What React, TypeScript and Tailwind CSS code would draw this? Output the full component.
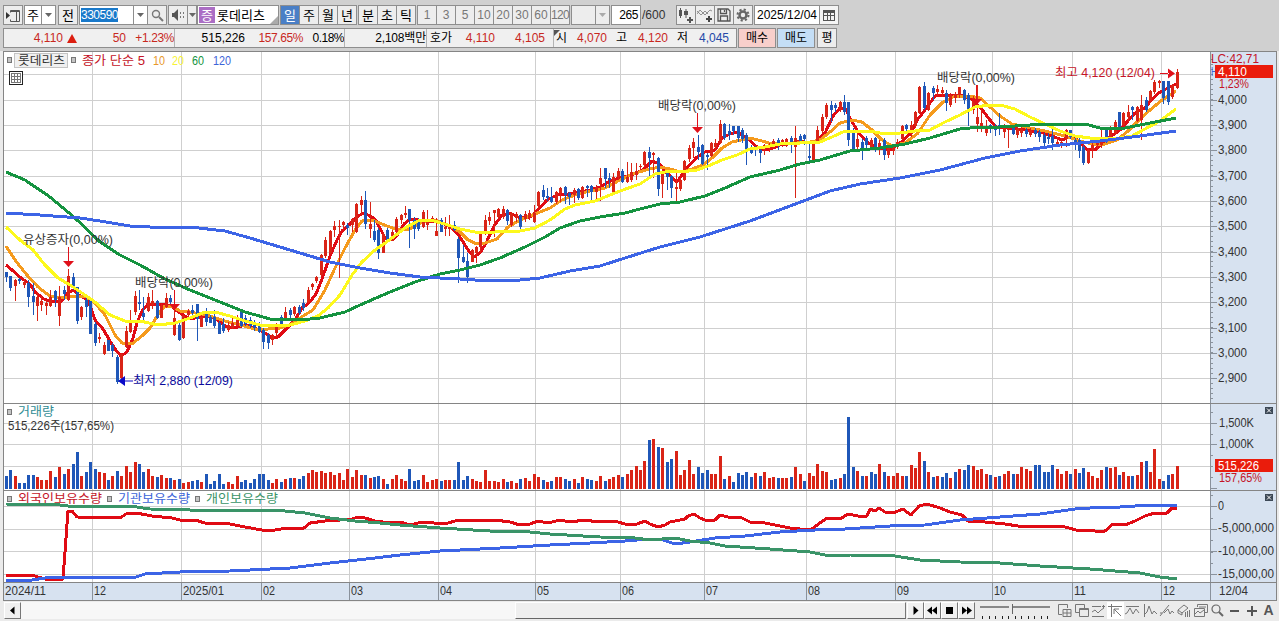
import React from 'react'
import clsx from 'clsx'

const RED = '#d92417'
const BLUE = '#1f57b8'
const GRID = '#cfcfcf'
const FONT = '"Liberation Sans", "Noto Sans CJK KR", sans-serif'

const FIRST_X = 6.5
const STEP = 4.434
const barX = (i: number) => Math.round(FIRST_X + i * STEP - 0.5)

// color high top bottom low
const CANDLES = `b 272 272 277 282|b 276 276 288 291|r 279 280 286 301|b 278 279 281 284|r 279 282 285 288|b 280 283 297 307|b 283 296 302 315|r 292 297 306 321|r 296 301 305 311|r 300 303 306 315
r 290 297 306 307|b 290 291 300 307|r 286 297 316 326|b 286 290 294 300|r 269 276 300 301|b 273 277 287 290|b 287 287 321 324|r 306 307 317 320|b 297 300 307 317|b 299 299 334 334
b 322 324 343 346|r 333 337 339 343|r 342 345 354 355|b 340 340 351 351|b 343 345 351 357|b 355 357 382 384|r 353 354 378 381|r 326 331 347 348|r 310 320 332 333|r 291 296 312 315
b 290 302 304 310|b 297 313 317 320|r 293 297 311 312|r 290 301 305 309|b 300 301 318 319|r 304 306 318 318|r 293 298 307 308|b 295 298 302 305|r 293 318 335 336|b 323 325 340 341
r 315 316 338 339|r 309 311 315 320|b 305 310 313 315|b 304 304 319 341|r 315 317 327 327|b 308 312 322 326|b 315 317 323 323|b 310 317 326 328|b 321 323 334 334|b 318 324 331 333
r 322 325 330 332|r 317 323 328 329|r 315 320 326 326|b 310 310 326 327|b 315 318 324 326|b 317 320 326 328|b 320 323 328 331|b 322 325 332 333|b 328 330 342 349|b 333 335 343 349
r 334 335 340 345|r 323 325 333 337|b 315 317 324 327|r 307 312 319 320|b 308 310 315 318|r 306 307 314 316|b 305 307 313 315|b 299 303 308 311|r 287 290 302 303|r 283 284 287 290
r 276 277 281 283|r 254 255 275 276|r 237 240 256 258|r 230 231 253 254|r 221 226 230 237|r 220 226 227 278|r 221 222 225 230|b 223 225 228 235|r 218 219 225 232|r 203 204 232 233
r 196 200 205 215|b 191 200 224 229|r 202 224 229 238|b 220 231 240 242|b 228 230 253 259|r 233 234 253 253|b 228 230 240 240|r 230 232 241 241|r 217 219 232 233|r 214 215 220 224
r 206 213 215 218|b 209 209 220 248|b 217 220 229 239|b 218 220 229 231|r 210 212 227 228|r 210 219 225 230|r 216 218 221 223|r 218 231 236 236|b 218 220 232 232|r 217 227 229 236
r 215 225 229 236|b 221 225 230 231|b 237 239 258 283|b 245 257 262 263|b 253 261 277 283|r 249 250 262 262|r 246 247 253 263|r 232 233 247 253|r 215 220 234 235|r 212 217 221 225
r 210 210 213 237|r 208 209 217 218|r 206 209 217 219|b 209 210 221 225|r 212 213 225 227|r 212 214 218 222|b 214 215 227 232|r 211 214 219 222|r 210 213 218 220|r 205 213 222 223
r 191 192 206 208|b 185 190 197 200|b 188 196 198 201|b 187 197 202 203|r 191 192 202 204|r 187 188 193 202|b 186 187 195 204|b 192 193 197 205|r 188 190 195 203|b 188 189 198 200
r 186 187 198 199|b 185 186 188 197|b 185 186 192 200|r 185 187 192 199|r 168 178 184 201|b 168 168 179 188|b 173 178 180 188|r 173 177 193 194|r 168 171 177 180|b 169 171 182 183
r 162 177 182 183|r 163 172 180 182|r 163 171 175 180|r 164 166 167 170|r 151 152 165 167|b 147 152 158 178|r 152 153 155 178|b 157 158 189 196|r 170 171 184 198|b 171 172 177 190
b 175 176 188 198|r 173 187 189 202|r 178 180 189 191|r 160 161 180 181|r 145 148 159 162|r 138 142 148 158|b 135 147 152 160|b 144 145 164 165|b 153 155 157 170|r 142 143 156 157
r 139 143 147 150|r 120 124 143 144|b 123 124 138 140|b 124 131 135 140|b 126 126 131 135|b 126 126 138 142|b 128 130 139 143|b 133 135 149 165|b 145 147 153 154|b 146 148 150 156
b 148 150 153 163|r 144 145 150 155|r 143 145 148 152|r 139 141 146 148|b 138 140 143 150|r 139 140 143 147|r 138 139 146 147|b 136 138 145 153|r 126 138 147 198|b 134 136 141 143
b 134 135 139 145|b 143 156 158 163|r 142 143 161 163|r 126 130 143 144|r 114 117 131 133|r 103 105 117 119|b 101 105 110 122|b 103 105 108 112|r 101 102 110 112|b 95 102 112 115
b 102 102 140 146|b 128 130 149 150|r 130 139 147 150|b 139 142 148 160|b 136 138 145 148|r 138 140 147 150|b 137 138 150 152|r 140 143 150 155|b 138 140 155 160|r 146 148 155 158
r 144 147 151 155|r 139 142 147 149|r 125 126 139 140|b 124 125 129 132|r 121 125 134 137|r 111 112 126 128|r 86 87 113 114|b 82 86 108 110|r 92 93 110 111|b 86 88 93 100
r 85 89 92 96|r 87 90 93 97|b 90 93 103 111|r 93 95 105 107|r 92 94 98 103|r 87 87 95 98|b 89 90 100 104|b 93 95 111 126|r 96 98 110 114|r 85 117 124 132
r 108 123 128 132|r 120 127 133 136|b 124 125 129 133|b 124 127 130 136|b 113 125 128 135|r 124 127 132 138|r 125 127 130 148|b 125 128 134 135|r 126 128 135 138|r 127 129 133 137
b 128 130 134 137|r 128 130 135 137|b 128 130 134 137|b 130 132 137 142|b 133 135 143 148|b 133 137 139 144|b 125 136 143 150|r 137 142 144 147|r 138 142 144 148|r 129 130 139 147
b 130 130 137 139|b 138 140 145 150|b 138 140 151 158|b 145 147 163 165|r 148 150 163 164|r 143 145 150 158|r 138 140 145 150|r 129 138 145 148|b 128 129 141 143|r 126 130 137 140
r 120 122 133 135|b 112 112 128 130|r 112 113 125 126|r 105 112 117 122|b 106 107 110 120|r 106 107 121 122|r 95 105 120 140|b 97 100 110 112|r 90 91 101 103|r 80 82 92 94
r 80 81 83 88|b 81 81 98 104|b 81 81 102 105|r 84 85 97 99|r 69 72 88 89`
  .split(/[|\n]/)
  .map((row) => {
    const [c, ...ys] = row.trim().split(' ')
    const [high, top, bottom, low] = ys.map(Number)
    return { color: c === 'r' ? RED : BLUE, high, top, bottom, low }
  })

// bar tops in thirds of a pixel, 267 is the base line
const VOLUME = `228b 210b 228r 250b 250b 225b 225b 230r 240r 240r 213r 230b 200r 222b 207r 192b 156b 228r 215b 186b
207b 216r 218r 240b 228r 213b 228r 198r 216r 186r 192b 216b 207r 228r 230b 225r 234r 234b 240r 237b
248r 246r 243b 240b 246r 222b 252b 243b 222b 252b 246r 252r 228r 246b 240b 248b 237b 222b 222b 240b
250r 237r 246b 237r 234b 234r 237b 228b 219r 210r 216r 213r 219r 216r 225r 219r 240r 207r 231r 210r
225r 225b 234r 231b 228b 237r 252b 237r 225r 237r 243r 207b 243b 240b 225r 246r 240r 237r 243b 240r
240r 240b 186b 240b 228b 237r 243r 246r 210r 243r 243r 246r 237r 246b 243r 249r 237b 234r 243r 222r
231r 240b 246r 243b 231r 231r 237b 243b 237r 249b 231r 237b 240b 243r 228r 243b 237r 231r 225r 231b
222r 210r 198r 210r 183r 120b 117r 141b 144r 186b 177b 153r 225r 210r 180r 222r 201b 219b 210b 222r
222r 168r 237b 228r 246b 219b 225b 216b 231b 219r 228b 216r 234r 231r 234b 234r 234r 231b 201r 222r
243b 219r 228r 192r 213r 216r 240b 237b 234r 222b 51b 201b 213r 228b 228r 216b 222b 192r 216b 228r
228r 219r 228r 228b 195r 204r 156r 183b 216r 231b 228r 231b 219b 234r 216b 207r 210b 195b 198r 210r
207r 222r 225b 231r 228b 222r 213r 222b 222r 201r 207r 213r 195b 195b 216b 216b 195b 207r 222r 213r
222b 207r 219b 204b 216r 228r 234r 210r 201b 204r 201r 225b 216r 228r 228b 225r 186r 183b 216r 147r
237r 243b 225b 222r 198r`
  .split(/\s+/)
  .map((v) => ({ top: 400 + parseInt(v) / 3, color: v.endsWith('r') ? RED : BLUE }))

const MA5 =
  '6,265 12,270 21,278 30,284 35,292 44,299 52,302 62,301 68,293 73,290 80,296 88,300 95,320 103,329 110,341 115,349 121,356 127,352 133,338 137,323 142,311 148,304 156,304 165,304 172,307 180,313 190,319 205,316 215,318 225,326 235,328 245,325 255,328 265,333 272,338 278,337 285,330 295,320 302,308 309,303 316,294 322,279 330,256 337,240 342,231 350,224 357,217 363,213 368,215 375,219 380,228 385,238 392,240 398,234 404,224 410,219 418,220 428,221 440,222 452,228 460,237 468,250 474,257 480,253 487,241 494,226 502,215 510,213 520,218 530,217 537,211 547,200 557,195 568,194 580,192 590,190 600,187 612,180 620,178 632,175 643,170 652,161 660,164 667,173 677,182 687,168 697,157 705,152 715,150 722,138 730,134 737,132 747,138 757,147 765,150 773,148 780,145 800,141 810,143 817,141 825,133 833,116 840,108 845,108 850,118 858,132 867,142 877,148 890,150 900,143 910,134 918,119 925,110 935,96 945,95 960,95 970,98 980,107 990,120 996,127 1010,128 1025,130 1040,132 1052,136 1062,140 1072,136 1080,142 1086,149 1095,150 1102,143 1110,137 1120,130 1127,122 1135,113 1145,108 1152,99 1160,92 1168,88 1176,84'
const MA10 =
  '6,246 15,260 27,275 38,287 50,296 62,298 73,296 85,296 95,303 105,315 115,335 122,343 132,344 142,336 150,328 157,316 165,306 172,306 180,311 190,312 210,316 225,321 240,325 255,329 268,329 280,328 292,324 303,316 313,310 325,290 335,268 345,248 355,230 362,221 372,220 382,224 395,229 410,229 422,222 435,220 450,226 460,232 468,240 477,244 485,243 497,239 508,227 520,220 535,214 550,208 562,200 575,195 590,191 605,188 620,180 635,173 650,169 660,167 670,169 680,172 692,169 703,165 712,158 722,148 732,142 750,138 762,141 772,144 790,143 810,142 820,140 830,132 840,123 852,120 862,122 872,130 882,140 892,146 905,143 918,133 930,115 943,102 955,96 970,96 980,98 990,107 1000,116 1012,124 1025,127 1045,131 1065,136 1080,141 1092,144 1105,144 1117,140 1127,132 1137,122 1150,110 1162,100 1176,91'
const MA20 =
  '6,227 20,240 33,250 45,265 58,278 70,285 82,293 95,302 110,315 125,321 140,321 158,325 175,323 190,318 205,312 215,312 230,316 245,321 260,325 277,326 290,325 305,321 318,316 328,308 340,295 352,275 362,262 375,250 388,241 405,228 418,221 430,220 445,224 460,229 475,232 495,232 520,231 535,228 550,220 565,209 575,205 595,201 620,191 640,184 655,174 670,171 680,172 697,170 708,166 722,160 737,155 750,149 765,147 780,144 800,143 820,142 832,137 843,132 855,131 870,131 885,134 900,133 915,131 930,130 945,122 960,115 975,107 990,105 1000,105 1015,109 1030,117 1045,124 1060,131 1075,136 1090,138 1105,138 1120,138 1132,136 1145,129 1160,121 1176,109'
const MA60 =
  '6,172 25,180 50,197 75,218 100,242 120,255 140,265 165,279 190,290 220,302 245,312 270,319 300,320 320,318 345,312 360,305 390,292 415,282 440,274 460,270 480,265 500,258 525,247 545,237 560,228 580,221 600,217 625,213 640,209 660,204 680,202 705,196 725,188 750,177 780,170 800,164 820,160 850,151 880,148 905,144 930,138 960,129 980,127 1000,127 1030,125 1050,124 1085,124 1100,128 1125,128 1150,123 1176,118'
const MA120 =
  '6,213 40,215 80,218 100,221 130,226 150,227 190,227 225,231 250,238 280,247 300,253 330,262 360,268 390,273 420,277 440,278 460,279 475,280 520,280 540,278 570,271 600,266 625,258 660,247 700,237 750,221 790,206 830,191 860,184 900,178 940,170 985,158 1020,151 1060,145 1100,141 1140,136 1176,131'

const FOREIGN =
  '6,576 12,575 32,575 38,577 45,579 63,579 68,511 72,511 77,517 120,518 126,514 136,513 152,516 172,518 180,520 195,520 205,523 230,524 245,527 262,530 275,530 287,528 304,528 310,523 325,521 340,520 352,519 358,517 365,518 375,521 390,523 400,522 410,525 422,522 445,524 455,521 470,520 495,520 510,522 520,525 530,524 538,521 548,523 560,520 570,522 585,520 598,522 605,521 618,522 625,524 637,524 645,521 650,524 658,527 665,525 670,522 685,519 688,516 694,514 700,518 705,520 715,520 720,515 728,517 740,517 750,522 760,522 775,525 790,528 800,529 812,529 820,523 827,518 840,519 848,514 858,516 867,516 870,509 875,511 879,508 885,512 893,513 903,509 911,515 919,506 927,504 940,508 950,512 962,515 968,521 985,522 1005,524 1018,526 1045,526 1065,527 1080,531 1088,530 1095,531 1105,531 1113,524 1125,525 1135,521 1145,516 1155,513 1167,513 1172,508 1177,508'
const INSTITUTION =
  '6,580 32,580 45,578 78,577 110,577 133,578 145,574 180,572 230,571 290,568 330,563 375,558 400,555 440,551 500,548 550,545 590,543 625,541 650,539 663,540 675,544 690,542 715,538 745,536 780,532 815,530 845,529 890,526 925,525 960,520 1000,517 1040,514 1075,509 1105,507 1120,507 1150,505 1177,505'
const PERSONAL =
  '6,504 60,505 68,506 130,506 150,509 190,510 275,510 305,513 330,518 355,521 380,523 400,525 440,528 490,531 520,531 550,534 600,537 635,538 650,540 675,538 690,541 710,543 725,546 770,549 810,552 825,555 850,555 895,556 920,560 960,562 1000,563 1040,566 1090,569 1140,573 1160,577 1177,579'

const MONTHS: [number, string][] = [
  [92, '12'], [181, '2025/01'], [261, '02'], [349, '03'], [438, '04'], [535, '05'], [620, '06'],
  [704, '07'], [806, '08'], [895, '09'], [992, '10'], [1072, '11'], [1161, '12'],
]
const PRICE_Y = [74, 100, 125, 150, 176, 201, 226, 252, 277, 302, 328, 353, 378]
const PRICE_LABELS = ['', '4,000', '3,900', '3,800', '3,700', '3,600', '3,500', '3,400', '3,300', '3,200', '3,100', '3,000', '2,900']

interface LabelProps {
  x: number
  y: number
  w: number
  children: string
  fill?: string
  size?: number
}

function Label({ x, y, w, children, fill = '#333', size = 12 }: LabelProps) {
  return (
    <text x={x} y={y} fill={fill} fontSize={size} fontFamily={FONT} textLength={w} lengthAdjust="spacingAndGlyphs">
      {children}
    </text>
  )
}

function Marker({ x, y }: { x: number; y: number }) {
  return <rect x={x + 0.5} y={y + 0.5} width="4" height="5" fill="#c4c4c4" stroke="#777" shapeRendering="crispEdges" />
}

function Grid({ top, bottom, rows }: { top: number; bottom: number; rows: number[] }) {
  return (
    <g fill={GRID} shapeRendering="crispEdges">
      {rows.map((y) => <rect key={y} x="4" y={y} width="1206" height="1" />)}
      {MONTHS.map(([x]) => <rect key={x} x={x} y={top} width="1" height={bottom - top} />)}
    </g>
  )
}

function Line({ points, color }: { points: string; color: string }) {
  return <polyline points={points} fill="none" stroke={color} strokeWidth="3" strokeLinejoin="round" shapeRendering="crispEdges" />
}

function DownArrow({ x, y, from }: { x: number; y: number; from: number }) {
  return (
    <g fill="#e0101a">
      <rect x={x - 0.5} y={from} width="1" height={y - from} />
      <path d={`M${x - 5.5} ${y}h11l-5.5 6z`} />
    </g>
  )
}

function Ticks({ from, to, step }: { from: number; to: number; step: number }) {
  const count = Math.floor((to - from) / step) + 1
  return (
    <g fill="#8a929c" shapeRendering="crispEdges">
      {Array.from({ length: count }, (_, i) => <rect key={i} x="1211" y={Math.round(from + i * step)} width="2" height="1" />)}
    </g>
  )
}

function CloseMark({ y }: { y: number }) {
  return (
    <g>
      <rect x="1265" y={y} width="8" height="7" fill="#3c4856" />
      <path d={`M1267 ${y + 1.5}l4 4m0-4l-4 4`} stroke="#fff" />
    </g>
  )
}

function PricePanel() {
  return (
    <div className="flex h-[351px]">
      <svg width="1206" height="351" viewBox="4 52 1206 351" className="bg-white">
        <Grid top={52} bottom={403} rows={PRICE_Y} />
        <Line points={MA5} color="#e00b14" />
        <Line points={MA10} color="#f59a1c" />
        <g shapeRendering="crispEdges">
          {CANDLES.map((c, i) => (
            <g key={i} fill={c.color}>
              <rect x={barX(i)} y={c.high} width="1" height={c.low - c.high} />
              <rect x={barX(i) - 1} y={c.top} width="3" height={c.bottom - c.top} />
            </g>
          ))}
        </g>
        <Line points={MA20} color="#fdf91c" />
        <Line points={MA60} color="#159340" />
        <Line points={MA120} color="#3c64e6" />

        <Label x={23} y={244} w={90}>유상증자(0,00%)</Label>
        <DownArrow x={68.5} y={261} from={247} />
        <Label x={135} y={287} w={78}>배당락(0,00%)</Label>
        <DownArrow x={174.5} y={304} from={290} />
        <Label x={658} y={110} w={78}>배당락(0,00%)</Label>
        <DownArrow x={697.5} y={127} from={113} />
        <Label x={937} y={82} w={78}>배당락(0,00%)</Label>
        <DownArrow x={976.5} y={99} from={85} />
        <path d="M118 381l7-5v10zM124 380.5h9v1h-9z" fill="#0a0ac8" />
        <Label x={133} y={385} w={100} fill="#0a0a9c">최저 2,880 (12/09)</Label>
        <Label x={1055} y={77} w={100} fill="#c41427">최고 4,120 (12/04)</Label>
        <path d="M1175 73.5l-7-5v10zM1160 73h9v1h-9z" fill="#e0101a" />

        <Marker x={7} y={57} />
        <rect x="14.5" y="53.5" width="53" height="14" fill="#f0f0f0" stroke="#c4c4c4" />
        <Label x={18} y={65} w={47}>롯데리츠</Label>
        <Marker x={71} y={57} />
        <Label x={82} y={65} w={63} fill="#c41427">종가 단순 5</Label>
        <Label x={153} y={65} w={12} fill="#e8982a">10</Label>
        <Label x={172} y={65} w={12} fill="#f7f235">20</Label>
        <Label x={192} y={65} w={12} fill="#159340">60</Label>
        <Label x={213} y={65} w={18} fill="#3c64d8">120</Label>
        <g fill="none" stroke="#222" shapeRendering="crispEdges">
          <rect x="9.5" y="71.5" width="13" height="13" fill="#fff" />
          <path d="M11.5 73.5h9v9h-9zM11.5 76.5h9M11.5 79.5h9M14.5 73.5v9M17.5 73.5v9" stroke="#777" />
        </g>
      </svg>
      <svg width="66" height="351" viewBox="1210 52 66 351" className="bg-[#d7e2f0]">
        <rect x="1210" y="52" width="1" height="351" fill="#8a929c" />
        <Ticks from={59} to={400} step={5.06} />
        {PRICE_Y.map((y, i) => i > 0 && (
          <g key={y}>
            <rect x="1211" y={y} width="6" height="1" fill="#8a929c" />
            <Label x={1218} y={y + 4} w={29}>{PRICE_LABELS[i]}</Label>
          </g>
        ))}
        <Label x={1211} y={63} w={48} fill="#c41427">LC:42,71</Label>
        <Label x={1211} y={76} w={6} fill="#3c64d8">H</Label>
        <rect x="1215" y="65" width="58" height="13" fill="#ea1c0c" />
        <Label x={1218} y={76} w={29} fill="#fff">4,110</Label>
        <Label x={1219} y={88} w={30} fill="#c41427">1,23%</Label>
      </svg>
    </div>
  )
}

function VolumePanel() {
  return (
    <div className="flex h-[87px] border-t border-[#858585]">
      <svg width="1206" height="86" viewBox="4 404 1206 86" className="bg-white">
        <Grid top={404} bottom={490} rows={[423, 444, 466]} />
        <g shapeRendering="crispEdges">
          {VOLUME.map((v, i) => (
            <rect key={i} x={barX(i) - 1} y={Math.round(v.top)} width="3" height={489 - Math.round(v.top)} fill={v.color} />
          ))}
        </g>
        <Marker x={7} y={409} />
        <Label x={18} y={416} w={36} fill="#2f8c94">거래량</Label>
        <Label x={8} y={430} w={106}>515,226주(157,65%)</Label>
      </svg>
      <svg width="66" height="86" viewBox="1210 404 66 86" className="bg-[#d7e2f0]">
        <rect x="1210" y="404" width="1" height="86" fill="#8a929c" />
        <Ticks from={412} to={489} step={10.8} />
        <path d="M1211 423.5h6M1211 444.5h6M1211 488.5h6" stroke="#8a929c" />
        <Label x={1219} y={427} w={35}>1,500K</Label>
        <Label x={1219} y={448} w={35}>1,000K</Label>
        <rect x="1215" y="459" width="58" height="13" fill="#ea1c0c" />
        <Label x={1218} y={470} w={41} fill="#fff">515,226</Label>
        <Label x={1219} y={482} w={43} fill="#c41427">157,65%</Label>
        <CloseMark y={407} />
      </svg>
    </div>
  )
}

function HoldingsPanel() {
  return (
    <div className="flex h-[92px] border-t border-[#858585]">
      <svg width="1206" height="91" viewBox="4 491 1206 91" className="bg-white">
        <Grid top={491} bottom={582} rows={[506, 529, 551, 574]} />
        <Marker x={7} y={496} />
        <Label x={18} y={503} w={84} fill="#c41427">외국인보유수량</Label>
        <Marker x={107} y={496} />
        <Label x={118} y={503} w={72} fill="#3c64d8">기관보유수량</Label>
        <Marker x={195} y={496} />
        <Label x={206} y={503} w={72} fill="#3a9468">개인보유수량</Label>
        <Line points={FOREIGN} color="#e00b14" />
        <Line points={INSTITUTION} color="#3c64e6" />
        <Line points={PERSONAL} color="#3a9468" />
      </svg>
      <svg width="66" height="91" viewBox="1210 491 66 91" className="bg-[#d7e2f0]">
        <rect x="1210" y="491" width="1" height="91" fill="#8a929c" />
        <Ticks from={495} to={580} step={11.3} />
        <path d="M1211 506.5h6M1211 529.5h6M1211 551.5h6M1211 574.5h6" stroke="#8a929c" />
        <Label x={1218} y={510} w={6}>0</Label>
        <Label x={1218} y={532} w={56}>-5,000,000</Label>
        <Label x={1218} y={555} w={56}>-10,000,00</Label>
        <Label x={1218} y={578} w={56}>-15,000,00</Label>
        <CloseMark y={494} />
      </svg>
    </div>
  )
}

function DateAxis() {
  return (
    <svg width="1272" height="19" viewBox="4 582 1272 19" className="bg-[#d7e2f0]">
      <rect x="4" y="582" width="1272" height="1" fill="#858585" />
      <rect x="4" y="600" width="1272" height="1" fill="#858585" />
      <Label x={5} y={595} w={41}>2024/11</Label>
      {MONTHS.map(([x, text]) => (
        <g key={x}>
          <rect x={x} y="583" width="1" height="17" fill="#8a929c" />
          <Label x={x + 2} y={595} w={text.length > 2 ? 41 : 12}>{text}</Label>
        </g>
      ))}
      <rect x="1210" y="583" width="1" height="17" fill="#8a929c" />
      <Label x={1219} y={595} w={29}>12/04</Label>
    </svg>
  )
}

function Cell({ className, children }: { className?: string; children?: React.ReactNode }) {
  return (
    <div className={clsx('flex h-5 shrink-0 items-center justify-center border border-[#8e8e8e] leading-none whitespace-nowrap', className)}>
      {children}
    </div>
  )
}

function Caret({ color = '#666' }: { color?: string }) {
  return <svg width="7" height="4" className="shrink-0"><path d="M0 0h7L3.5 4z" fill={color} /></svg>
}

function Toolbar() {
  const btn = 'w-5 bg-[#ededed] text-[13px]'
  return (
    <div className="flex h-5">
      <Cell className="w-5 bg-[#ededed]">
        <svg width="14" height="13" fill="none" stroke="#555">
          <path d="M4.5 3.5v-2h9v11h-9v-2M10.5 1.5v11M4.5 2.5h9" />
          <path d="M0 3l4 3.5L0 10z" fill="#333" stroke="none" />
        </svg>
      </Cell>
      <Cell className="ml-px w-[18px] bg-white text-[13px]">주</Cell>
      <Cell className="-ml-px w-[15px] bg-white"><Caret /></Cell>
      <Cell className="ml-[2px] w-5 bg-[#ededed] text-[13px]">전</Cell>
      <Cell className="ml-px w-[55px] justify-start! bg-white pl-px">
        <span className="bg-[#1979ca] py-px text-[12px] tracking-[-0.5px] text-white">330590</span>
      </Cell>
      <Cell className="-ml-px w-[15px] bg-white"><Caret /></Cell>
      <Cell className="-ml-px w-5 bg-[#ededed]">
        <svg width="13" height="13" fill="none" stroke="#777"><circle cx="5" cy="5" r="3.5" strokeWidth="1.4" /><path d="M8 8l4 4" strokeWidth="2" /></svg>
      </Cell>
      <Cell className="ml-px w-5 bg-[#ededed]">
        <svg width="14" height="12"><path d="M1 4h2l4-4v12L3 8H1z" fill="#555" /><path d="M9 3h1v2H9zM12 3h1v2h-1zM9 7h1v2H9zM12 7h1v2h-1z" fill="#777" /></svg>
      </Cell>
      <Cell className="-ml-px w-[10px] bg-[#ededed]"><Caret /></Cell>
      <Cell className="relative w-[82px] justify-start! bg-white">
        <span className="ml-px flex h-4 w-4 items-center justify-center bg-[#ab6dc4] text-[13px] text-white">증</span>
        <span className="ml-[2px] text-[13px]">롯데리츠</span>
        <svg className="absolute right-0 bottom-0" width="8" height="8"><path d="M8 0v8H0z" fill="#aaa" /></svg>
      </Cell>
      <Cell className="ml-px w-5 bg-[#4a7fc6] text-[13px] text-white">일</Cell>
      {['주', '월', '년'].map((t) => <Cell key={t} className={clsx(btn, '-ml-px')}>{t}</Cell>)}
      {['분', '초', '틱'].map((t, i) => <Cell key={t} className={clsx(btn, i ? '-ml-px' : 'ml-px')}>{t}</Cell>)}
      {['1', '3', '5', '10', '20', '30', '60', '120'].map((t, i) => (
        <Cell key={t} className={clsx('w-5 bg-[#ededed] text-[12px] text-[#777]', i ? '-ml-px' : 'ml-px', t.length > 2 && 'tracking-[-0.7px]')}>{t}</Cell>
      ))}
      <Cell className="ml-px w-[25px] bg-[#ededed]" />
      <Cell className="-ml-px w-[15px] bg-[#ededed]"><Caret color="#aaa" /></Cell>
      <Cell className="ml-px w-[30px] justify-end! bg-white pr-[2px] text-[12px] tracking-[-0.4px]">265</Cell>
      <span className="flex w-[35px] items-center pl-px text-[12px] text-[#333]">/600</span>
      <Cell className="w-5 bg-[#ededed]">
        <svg width="16" height="15" fill="#555"><path d="M1 2h3v6H1zM2 0h1v10H2zM6 3h4v4H6zM7.500 1h1v9h-1zM11 9h2v2h2v2h-2v2h-2v-2H9v-2h2z" /></svg>
      </Cell>
      <Cell className="-ml-px w-5 bg-[#ededed]">
        <svg width="16" height="15" fill="none" stroke="#777"><path d="M0 6l3-4 5 5 5-5 2 1M0 3l4 4 4-4 3 3" strokeWidth="0.8" /><path d="M11 8h2v2h2v2h-2v2h-2v-2H9v-2h2z" fill="#444" stroke="none" /></svg>
      </Cell>
      <Cell className="-ml-px w-5 bg-[#ededed]">
        <svg width="14" height="14" fill="none" stroke="#555" strokeWidth="1.3"><path d="M1 1h10l2 2v10H1zM3.500 1v4.500h6V1M3.500 13V8h7v5M7.500 2v2" /></svg>
      </Cell>
      <Cell className="-ml-px w-5 bg-[#ededed]">
        <svg width="14" height="14" fill="none" stroke="#666"><circle cx="7" cy="7" r="3.500" strokeWidth="2.500" /><circle cx="7" cy="7" r="5.500" strokeWidth="2" strokeDasharray="2.160 2.160" /></svg>
      </Cell>
      <Cell className="ml-px w-[66px] bg-white text-[12px]">2025/12/04</Cell>
      <Cell className="-ml-px w-5 bg-[#f4f4f4]">
        <svg width="12" height="11" fill="none" stroke="#555" shapeRendering="crispEdges"><path d="M.5.5h11v10H.5zM.5 5.500h11M4.500 3v7M7.500 3v7" /><path d="M1 2h10" strokeWidth="2" /></svg>
      </Cell>
    </div>
  )
}

function QuoteBar() {
  const num = 'shrink-0 text-right text-[12px]'
  return (
    <div className="mt-[3px] flex h-5">
      <div className="flex h-5 w-[734px] items-center border border-[#8e8e8e] bg-[#f0f0f0] leading-none whitespace-nowrap text-black">
        <span className={clsx(num, 'w-[59px] text-[#c8281e]')}>4,110</span>
        <svg className="ml-1" width="10" height="9"><path d="M5 0l5 9H0z" fill="#dc1e10" /></svg>
        <span className={clsx(num, 'w-[49px] text-[#c8281e]')}>50</span>
        <span className={clsx(num, 'w-[48px] tracking-[-0.4px] text-[#c8281e]')}>+1.23%</span>
        <span className="h-full w-px bg-[#b4b4b4]" />
        <span className={clsx(num, 'w-[70px]')}>515,226</span>
        <span className={clsx(num, 'w-[58px] tracking-[-0.4px] text-[#c8281e]')}>157.65%</span>
        <span className={clsx(num, 'w-[41px] tracking-[-0.5px]')}>0.18%</span>
        <span className="h-full w-px bg-[#b4b4b4]" />
        <span className={clsx(num, 'w-[81px] tracking-[-0.2px]')}>2,108백만</span>
        <span className="h-full w-px bg-[#b4b4b4]" />
        <span className="w-[26px] shrink-0 pl-[3px] text-[12px]">호가</span>
        <span className={clsx(num, 'w-[42px] text-[#c8281e]')}>4,110</span>
        <span className={clsx(num, 'w-[50px] text-[#c8281e]')}>4,105</span>
        <span className="relative ml-2 h-full w-px bg-[#b4b4b4]">
          <svg className="absolute top-px left-px" width="6" height="6"><path d="M0 0h6L0 6z" fill="#555" /></svg>
        </span>
        <span className="w-[13px] shrink-0 pl-[2px] text-[12px]">시</span>
        <span className={clsx(num, 'w-[40px] text-[#c8281e]')}>4,070</span>
        <span className="ml-[9px] w-[12px] shrink-0 text-[12px]">고</span>
        <span className={clsx(num, 'w-[40px] text-[#c8281e]')}>4,120</span>
        <span className="ml-[9px] w-[12px] shrink-0 text-[12px]">저</span>
        <span className={clsx(num, 'w-[40px] text-[#2448a8]')}>4,045</span>
      </div>
      <Cell className="ml-px w-[38px] bg-[#f8cfcb] text-[12px]">매수</Cell>
      <Cell className="ml-px w-[38px] bg-[#c4def6] text-[12px]">매도</Cell>
      <Cell className="ml-[2px] w-5 bg-[#ededed] text-[12px]">평</Cell>
    </div>
  )
}

function PlayButton({ d }: { d: string }) {
  return (
    <div className="flex h-[17px] w-[17px] shrink-0 items-center justify-center border border-t-white border-r-[#777] border-b-[#777] border-l-white bg-[#f0f0f0]">
      <svg width="11" height="9"><path d={d} fill="#000" /></svg>
    </div>
  )
}

const TOOL_ICONS = [
  'M5 11.500H1.500v-10h9V5M6 6.500h8v7H6zM10 7v6M6 10h8',
  'M5 9.500H1.500v-8h9V5M5.500 5.500h9v8h-9zM5.500 6.500h9',
  'M1 3.500h9M1 13.500h12M1 9l3-2 3 3 3-3 3-2M11 3.500h3M12.500 2v3',
  'M3.500 1v13M0 3.500h14M6 6l7 7M6 11V6h5',
  'M1 3.500h13M0 11l2-1 3-5 3 6 3-5 3 4',
  'M2.500 1v13M2 12l3-3 2-6 3 8 2-3 3 3',
  'M1 13L10 2M5 10l4-4 2 5 2-3 2 2M1 10h2',
  'M2 7l6-5 4 3-6 5zM2 7v3l4 2V9M9.500 9v5M11.500 8v6M13.500 7v7',
  'M4.500 4V1.500h10v8H12M1.500 5.500h10v8h-10zM2 11l3-3 2 2 4-3M6 4h7',
]

function BottomBar() {
  return (
    <div className="flex h-[18px] items-center">
      <PlayButton d="M3 4.500l4.500-4v8z" />
      <div className="h-[17px] w-[494px] bg-[#f7f7f7]" />
      <div className="h-[17px] w-[391px] border border-t-white border-r-[#777] border-b-[#666] border-l-white bg-[#efefef]" />
      <div className="ml-px flex">
        <PlayButton d="M3.500 0l5 4.500-5 4.500z" />
        <PlayButton d="M0 4.500l5-4v8zM5 4.500l5-4v8z" />
        <PlayButton d="M2 1h7v7H2z" />
        <PlayButton d="M1 .5l5 4-5 4zM6 .5l5 4-5 4z" />
      </div>
      <svg className="ml-[5px]" width="72" height="17" shapeRendering="crispEdges">
        <path d="M0 5h70" stroke="#888" strokeWidth="2" />
        <rect x="29" y="3" width="3" height="4" fill="#ebebeb" />
        <rect x="32" y="2" width="1" height="10" fill="#666" />
        {Array.from({ length: 11 }, (_, i) => <rect key={i} x={2 + Math.round(i * 6.5)} y="14" width="1" height="3" fill="#222" />)}
      </svg>
      <div className="ml-1 flex">
        {TOOL_ICONS.map((d, i) => (
          <div key={i} className={clsx('flex h-[17px] w-[17px] items-center justify-center', i === 3 && 'bg-white')}>
            <svg width="15" height="15" fill="none" stroke="#777"><path d={d} /></svg>
          </div>
        ))}
        <svg width="17" height="17" fill="none" stroke="#666"><circle cx="7" cy="7" r="4" strokeWidth="1.200" /><path d="M10 10l4 4" strokeWidth="2" /></svg>
        <svg width="17" height="17"><path d="M4 9h9" stroke="#555" strokeWidth="2" /></svg>
        <svg width="17" height="17"><path d="M4 9h10M9 4v10" stroke="#555" strokeWidth="2" /></svg>
        <span className="w-[17px] text-center text-[14px] leading-[17px] font-bold text-[#555]">A</span>
      </div>
    </div>
  )
}

export default function App() {
  return (
    <div className="h-[621px] w-[1279px] overflow-hidden bg-[#ebebeb] font-['Liberation_Sans','Noto_Sans_CJK_KR',sans-serif]">
      <div className="h-[51px] bg-[#d0d0d0] pt-[5px] pl-[3px]">
        <Toolbar />
        <QuoteBar />
      </div>
      <div className="ml-[3px] flex w-[1274px] flex-col border-x border-t border-[#858585]">
        <PricePanel />
        <VolumePanel />
        <HoldingsPanel />
        <DateAxis />
      </div>
      <div className="pl-[4px]">
        <BottomBar />
      </div>
    </div>
  )
}
